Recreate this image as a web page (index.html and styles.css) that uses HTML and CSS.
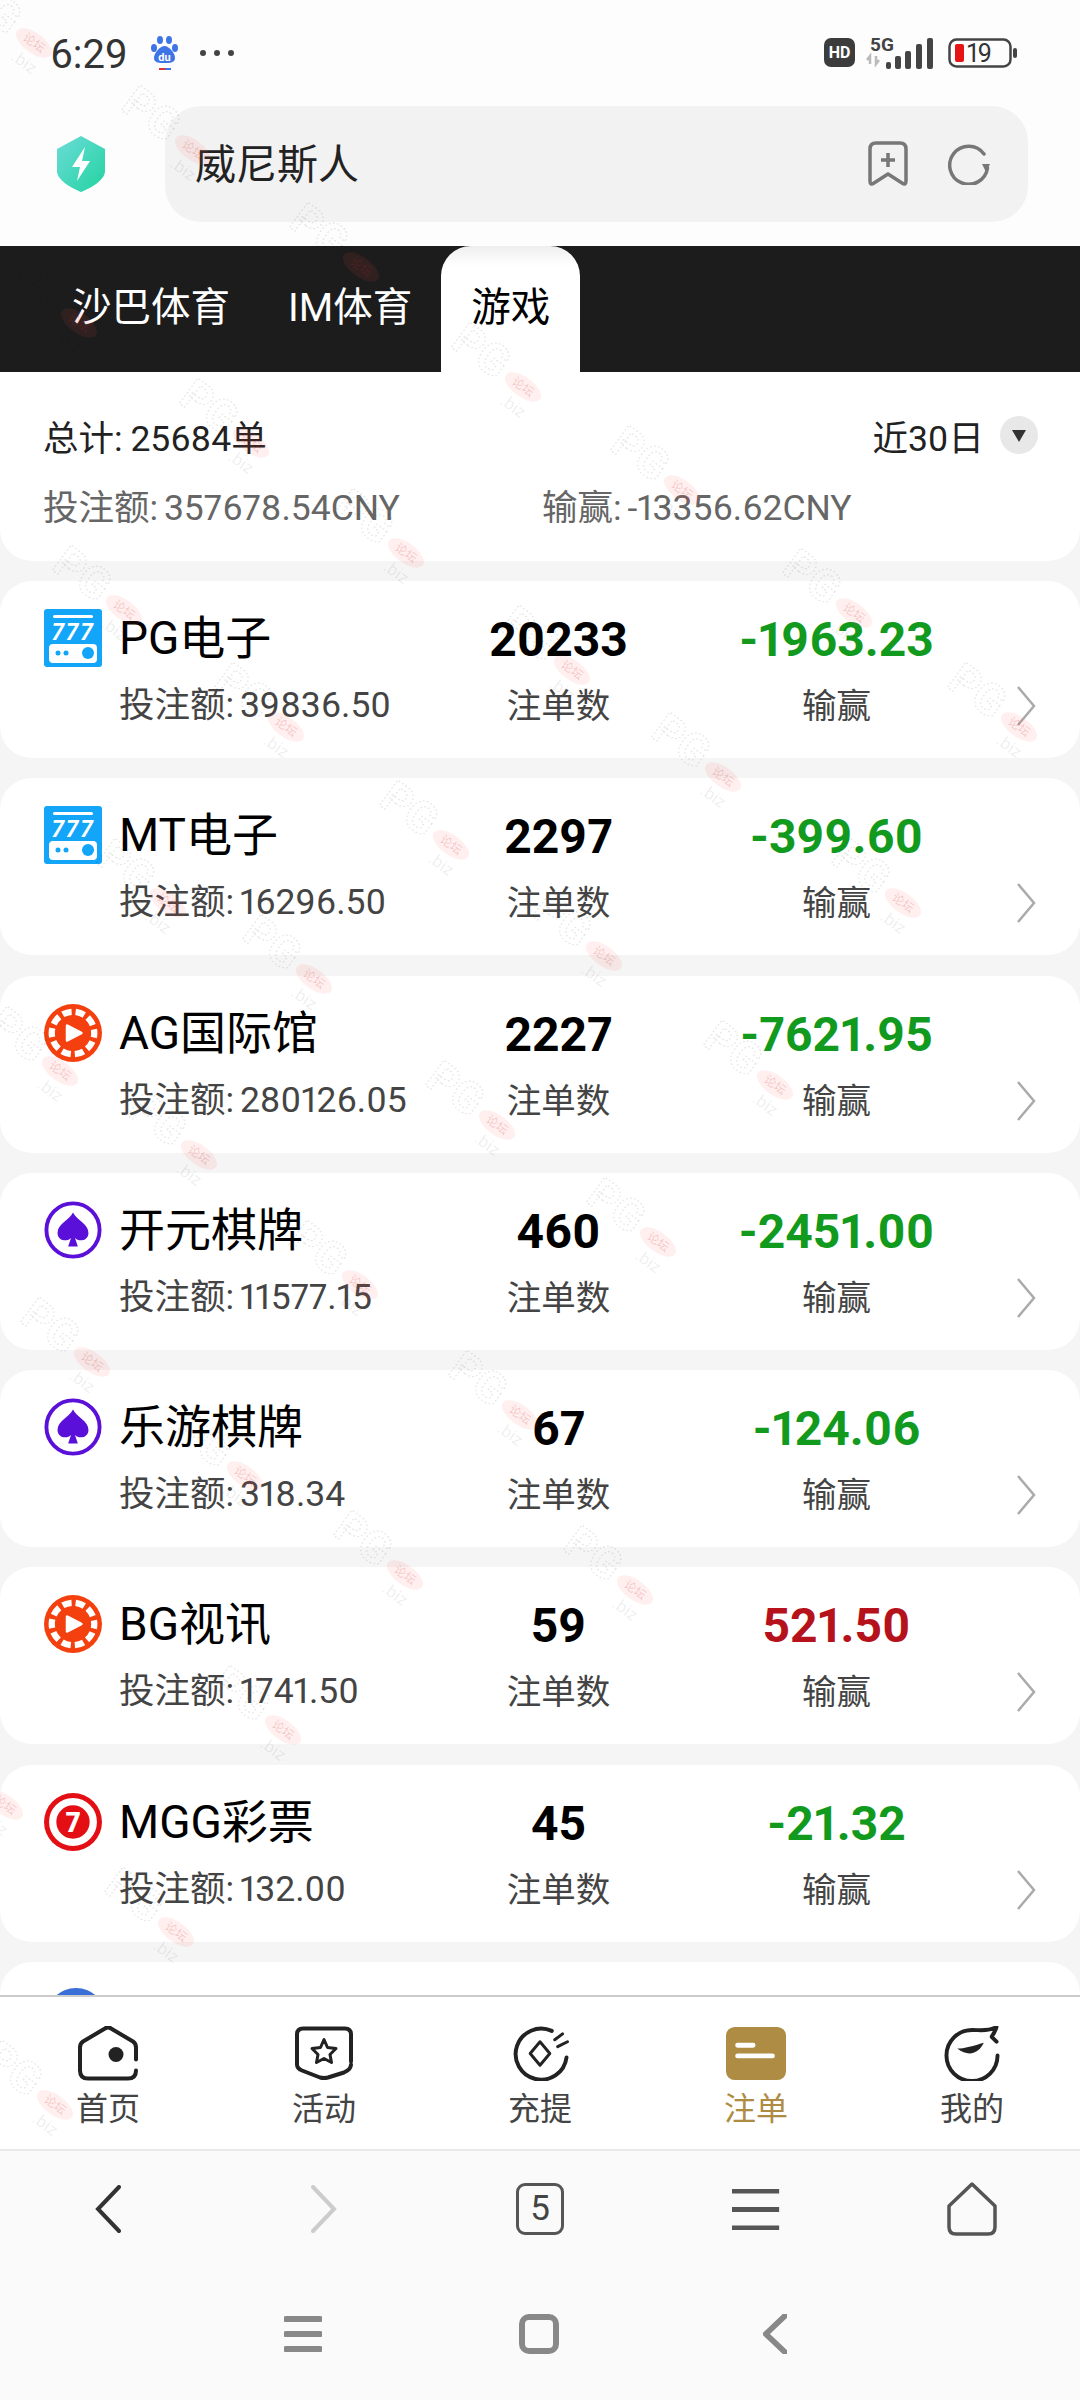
FILE: index.html
```html
<!DOCTYPE html>
<html lang="zh-CN">
<head>
    <meta charset="UTF-8">
    <meta name="viewport" content="width=device-width, initial-scale=1.0">
    <title>注单</title>
    <link rel="stylesheet" href="styles.css">
</head>
<body>
    <!-- Icon defs -->
    <svg class="defs" xmlns="http://www.w3.org/2000/svg">
        <defs>
            <linearGradient id="shield-fill" x1="0" y1="0" x2="1" y2="1">
                <stop offset="0" stop-color="#6ddcd8"></stop>
                <stop offset="1" stop-color="#22d3a0"></stop>
            </linearGradient>
            <symbol id="icon-slot" viewBox="0 0 58 58">
                <rect width="58" height="58" rx="3" fill="#12a5f8"></rect>
                <rect x="9" y="6" width="40" height="3" rx="1.5" fill="#fff"></rect>
                <text x="29" y="31" class="slot-text">777</text>
                <rect x="5" y="35" width="48" height="19" rx="4" fill="#fff"></rect>
                <circle cx="14" cy="44" r="2.500" fill="#12a5f8"></circle>
                <circle cx="22" cy="44" r="2.500" fill="#12a5f8"></circle>
                <circle cx="44" cy="44" r="6" fill="#12a5f8"></circle>
            </symbol>
            <symbol id="icon-reel" viewBox="0 0 60 60">
                <circle cx="30" cy="30" r="30" fill="#f4400f"></circle>
                <circle cx="30" cy="30" r="22" fill="none" stroke="#fff" stroke-width="6.500" stroke-dasharray="9.500 4.320" stroke-dashoffset="4.750"></circle>
                <path d="M24 22.500 L38.500 30 L24 37.500 Z" fill="#fff" stroke="#fff" stroke-width="3" stroke-linejoin="round"></path>
            </symbol>
            <symbol id="icon-spade" viewBox="0 0 60 60">
                <circle cx="30" cy="30" r="27.500" fill="none" stroke="#5a10d8" stroke-width="4"></circle>
                <path d="M30 12 C34 20 46 24 46 33 C46 41 36 43 32 38 L35 47 H25 L28 38 C24 43 14 41 14 33 C14 24 26 20 30 12 Z" fill="#5a10d8"></path>
            </symbol>
            <symbol id="icon-seven" viewBox="0 0 60 60">
                <circle cx="30" cy="30" r="30" fill="#e40f14"></circle>
                <circle cx="30" cy="30" r="21" fill="none" stroke="#fff" stroke-width="7.500"></circle>
                <text x="30" y="40" class="seven-text">7</text>
            </symbol>
            <symbol id="mark" overflow="visible">
                <g transform="rotate(36)">
                    <text x="-84" y="10" class="mark-pg">PG</text>
                    <ellipse cx="0" cy="0" rx="21" ry="10" fill="#ff4d4d" fill-opacity="0.09"></ellipse>
                    <text x="0" y="4" class="mark-pill">论坛</text>
                    <text x="-10" y="27" class="mark-biz">.biz</text>
                </g>
            </symbol>
        </defs>
    </svg>

    <div class="page">
        <header class="top">
            <div class="status-bar">
                <span class="clock">6:29</span>
                <svg class="baidu" viewBox="0 0 34 36">
                    <ellipse cx="12" cy="5" rx="3" ry="4" fill="#3d74e6"></ellipse>
                    <ellipse cx="21" cy="5" rx="3" ry="4" fill="#3d74e6"></ellipse>
                    <ellipse cx="6" cy="13" rx="3" ry="4" fill="#3d74e6"></ellipse>
                    <ellipse cx="27" cy="13" rx="3" ry="4" fill="#3d74e6"></ellipse>
                    <path d="M16.500 11 C21 11 27 18 27 23 C27 28 21 28 16.500 28 C12 28 6 28 6 23 C6 18 12 11 16.500 11 Z" fill="#3d74e6"></path>
                    <text x="16.500" y="26" class="baidu-text">du</text>
                    <rect x="11" y="33" width="6" height="2" fill="#e2342d"></rect>
                    <rect x="17" y="33" width="6" height="2" fill="#3d74e6"></rect>
                </svg>
                <span class="status-dots"><i></i><i></i><i></i></span>
                <svg class="status-icons" viewBox="0 0 194 40">
                    <rect x="0" y="3" width="31" height="29" rx="7" fill="#3c3c3c"></rect>
                    <text x="15.500" y="23" class="hd-text">HD</text>
                    <text x="46" y="16" class="five-g">5G</text>
                    <path d="M46 29 v-8 l-3 4 M52 21 v8 l3 -4" fill="none" stroke="#bbb" stroke-width="2.500"></path>
                    <rect x="62" y="27" width="5" height="7" rx="2" fill="#444"></rect>
                    <rect x="71" y="21" width="6" height="13" rx="2" fill="#444"></rect>
                    <rect x="81" y="16" width="6" height="18" rx="2" fill="#444"></rect>
                    <rect x="92" y="9" width="6" height="25" rx="2" fill="#444"></rect>
                    <rect x="103" y="3" width="6" height="31" rx="2" fill="#444"></rect>
                    <rect x="125.500" y="4.500" width="61" height="27" rx="7" fill="none" stroke="#444" stroke-width="2.500"></rect>
                    <rect x="131" y="9" width="9" height="18" rx="2" fill="#e61414"></rect>
                    <text x="143" y="27" class="battery-text">19</text>
                    <rect x="189" y="13" width="4" height="10" rx="2" fill="#444"></rect>
                </svg>
            </div>
            <div class="address-row">
                <svg class="shield" viewBox="0 0 48 56">
                    <path d="M24 0 L48 13 V35 C48 44 34 52 24 56 C14 52 0 44 0 35 V13 Z" fill="url(#shield-fill)"></path>
                    <path d="M28 11 L15 31 H23 L20 45 L33 25 H25 Z" fill="#fff"></path>
                </svg>
                <div class="address-bar">
                    <span class="address-text">威尼斯人</span>
                    <svg class="bookmark" viewBox="0 0 40 46">
                        <path d="M2 40 V8 Q2 2 8 2 H32 Q38 2 38 8 V40 Q38 45 34 42 L20 33 L6 42 Q2 45 2 40 Z M20 12 V26 M13 19 H27" fill="none" stroke="#777" stroke-width="3.500" stroke-linejoin="round"></path>
                    </svg>
                    <svg class="refresh" viewBox="0 0 42 42">
                        <path d="M36 11 A19 19 0 1 0 39.500 25" fill="none" stroke="#777" stroke-width="3.500" stroke-linecap="round"></path>
                        <path d="M34 21 H42 L38 29 Z" fill="#777"></path>
                    </svg>
                </div>
            </div>
        </header>

        <nav class="tabs">
            <div class="tab">沙巴体育</div>
            <div class="tab">IM体育</div>
            <div class="tab active">游戏</div>
        </nav>

        <section class="summary">
            <div class="summary-row">
                <span>总计: 25684单</span>
                <span class="range">近30日<i class="range-arrow"></i></span>
            </div>
            <div class="summary-row muted">
                <span class="summary-bet">投注额: 357678.54CNY</span>
                <span class="summary-win">输赢: -13356.62CNY</span>
            </div>
        </section>

        <main class="game-list">
            <div class="game-card">
                <div class="game-info">
                    <div class="game-name"><svg class="game-icon"><use href="#icon-slot"></use></svg>PG电子</div>
                    <div class="game-bet">投注额: 39836.50</div>
                </div>
                <div class="stat"><strong>20233</strong><span>注单数</span></div>
                <div class="stat"><strong class="loss">-1963.23</strong><span>输赢</span></div>
                <svg class="chevron" viewBox="0 0 20 40"><path d="M2 1 L18 20 L2 39"></path></svg>
            </div>
            <div class="game-card">
                <div class="game-info">
                    <div class="game-name"><svg class="game-icon"><use href="#icon-slot"></use></svg>MT电子</div>
                    <div class="game-bet">投注额: 16296.50</div>
                </div>
                <div class="stat"><strong>2297</strong><span>注单数</span></div>
                <div class="stat"><strong class="loss">-399.60</strong><span>输赢</span></div>
                <svg class="chevron" viewBox="0 0 20 40"><path d="M2 1 L18 20 L2 39"></path></svg>
            </div>
            <div class="game-card">
                <div class="game-info">
                    <div class="game-name"><svg class="game-icon"><use href="#icon-reel"></use></svg>AG国际馆</div>
                    <div class="game-bet">投注额: 280126.05</div>
                </div>
                <div class="stat"><strong>2227</strong><span>注单数</span></div>
                <div class="stat"><strong class="loss">-7621.95</strong><span>输赢</span></div>
                <svg class="chevron" viewBox="0 0 20 40"><path d="M2 1 L18 20 L2 39"></path></svg>
            </div>
            <div class="game-card">
                <div class="game-info">
                    <div class="game-name"><svg class="game-icon"><use href="#icon-spade"></use></svg>开元棋牌</div>
                    <div class="game-bet">投注额: 11577.15</div>
                </div>
                <div class="stat"><strong>460</strong><span>注单数</span></div>
                <div class="stat"><strong class="loss">-2451.00</strong><span>输赢</span></div>
                <svg class="chevron" viewBox="0 0 20 40"><path d="M2 1 L18 20 L2 39"></path></svg>
            </div>
            <div class="game-card">
                <div class="game-info">
                    <div class="game-name"><svg class="game-icon"><use href="#icon-spade"></use></svg>乐游棋牌</div>
                    <div class="game-bet">投注额: 318.34</div>
                </div>
                <div class="stat"><strong>67</strong><span>注单数</span></div>
                <div class="stat"><strong class="loss">-124.06</strong><span>输赢</span></div>
                <svg class="chevron" viewBox="0 0 20 40"><path d="M2 1 L18 20 L2 39"></path></svg>
            </div>
            <div class="game-card">
                <div class="game-info">
                    <div class="game-name"><svg class="game-icon"><use href="#icon-reel"></use></svg>BG视讯</div>
                    <div class="game-bet">投注额: 1741.50</div>
                </div>
                <div class="stat"><strong>59</strong><span>注单数</span></div>
                <div class="stat"><strong class="win">521.50</strong><span>输赢</span></div>
                <svg class="chevron" viewBox="0 0 20 40"><path d="M2 1 L18 20 L2 39"></path></svg>
            </div>
            <div class="game-card">
                <div class="game-info">
                    <div class="game-name"><svg class="game-icon"><use href="#icon-seven"></use></svg>MGG彩票</div>
                    <div class="game-bet">投注额: 132.00</div>
                </div>
                <div class="stat"><strong>45</strong><span>注单数</span></div>
                <div class="stat"><strong class="loss">-21.32</strong><span>输赢</span></div>
                <svg class="chevron" viewBox="0 0 20 40"><path d="M2 1 L18 20 L2 39"></path></svg>
            </div>
            <div class="game-card">
                <div class="game-info">
                    <i class="blue-dot"></i>
                </div>
            </div>
        </main>

        <!-- Site tab bar -->
        <nav class="bottom-nav">
            <div class="nav-item">
                <svg class="nav-icon" viewBox="0 0 60 54">
                    <path d="M58 33 V21 Q58 17 55 15 L33 2 Q30 0 27 2 L5 15 Q2 17 2 21 V44 Q2 52 10 52 H50 Q58 52 58 44"></path>
                    <circle cx="38" cy="28" r="7.500" class="solid"></circle>
                </svg>
                <span>首页</span>
            </div>
            <div class="nav-item">
                <svg class="nav-icon" viewBox="0 0 60 54">
                    <path d="M57 35 V8 Q57 2 51 2 H9 Q3 2 3 8 V38 Q3 42 8 44 L26 51 Q30 52 34 51 L50 46 Q57 43 57 38"></path>
                    <path class="thin" d="M30 13 L33.500 21 L42 22 L36 28 L37.500 36 L30 32 L22.500 36 L24 28 L18 22 L26.500 21 Z"></path>
                </svg>
                <span>活动</span>
            </div>
            <div class="nav-item">
                <svg class="nav-icon" viewBox="0 0 60 56">
                    <path d="M42 5 A26 26 0 1 0 57 32"></path>
                    <path class="thin" d="M30 16 L40 28 L30 40 L20 28 Z"></path>
                    <path class="thin" d="M45 14 L53 8 M48 21 L58 16"></path>
                </svg>
                <span>充提</span>
            </div>
            <div class="nav-item active">
                <svg class="nav-icon" viewBox="0 0 62 55">
                    <rect width="62" height="55" rx="9" fill="#ae8c43" stroke="none"></rect>
                    <path class="cut" d="M12 19 H28 M12 30 H48"></path>
                </svg>
                <span>注单</span>
            </div>
            <div class="nav-item">
                <svg class="nav-icon" viewBox="0 0 60 56">
                    <path d="M56 30 A26 26 0 1 1 30 4 C38 4 46 6 55 1 C54 6 50 10 50 11 L55 16"></path>
                    <path d="M15 23 C22 23 32 20 42 17 C38 26 28 33 15 23 Z" class="solid"></path>
                </svg>
                <span>我的</span>
            </div>
        </nav>

        <!-- Browser toolbar -->
        <div class="browser-bar">
            <div class="browser-item">
                <svg class="browser-icon dark" viewBox="0 0 26 48"><path d="M24 2 L3 24 L24 46"></path></svg>
            </div>
            <div class="browser-item">
                <svg class="browser-icon faint" viewBox="0 0 26 48"><path d="M2 2 L23 24 L2 46"></path></svg>
            </div>
            <div class="browser-item">
                <div class="tab-count">5</div>
            </div>
            <div class="browser-item">
                <svg class="browser-icon menu" viewBox="0 0 46 40"><path d="M0 2 H46 M0 20 H46 M0 38 H46"></path></svg>
            </div>
            <div class="browser-item">
                <svg class="browser-icon tall" viewBox="0 0 50 54"><path d="M25 2 L48 24 V45 Q48 52 41 52 H9 Q2 52 2 45 V24 Z" stroke-linejoin="round"></path></svg>
            </div>
        </div>

        <!-- Phone system keys -->
        <div class="system-bar">
            <svg class="system-icon menu" viewBox="0 0 38 36"><path d="M2 3 H36 M2 18 H36 M2 33 H36"></path></svg>
            <svg class="system-icon" viewBox="0 0 40 40"><rect x="3" y="3" width="34" height="34" rx="7"></rect></svg>
            <svg class="system-icon" viewBox="0 0 26 42"><path d="M23 2 L3 21 L23 40"></path></svg>
        </div>
    </div>

    <!-- Site watermark, scattered over the page -->
    <svg class="watermark" viewBox="0 0 1080 2400" aria-hidden="true">
        <use href="#mark" x="34" y="43"></use>
        <use href="#mark" x="193" y="150"></use>
        <use href="#mark" x="361" y="267"></use>
        <use href="#mark" x="79" y="323"></use>
        <use href="#mark" x="251" y="443"></use>
        <use href="#mark" x="523" y="387"></use>
        <use href="#mark" x="406" y="553"></use>
        <use href="#mark" x="682" y="490"></use>
        <use href="#mark" x="124" y="610"></use>
        <use href="#mark" x="854" y="613"></use>
        <use href="#mark" x="572" y="670"></use>
        <use href="#mark" x="286" y="727"></use>
        <use href="#mark" x="1019" y="727"></use>
        <use href="#mark" x="723" y="777"></use>
        <use href="#mark" x="168" y="903"></use>
        <use href="#mark" x="451" y="845"></use>
        <use href="#mark" x="903" y="903"></use>
        <use href="#mark" x="604" y="956"></use>
        <use href="#mark" x="314" y="979"></use>
        <use href="#mark" x="775" y="1085"></use>
        <use href="#mark" x="60" y="1071"></use>
        <use href="#mark" x="497" y="1125"></use>
        <use href="#mark" x="199" y="1155"></use>
        <use href="#mark" x="658" y="1242"></use>
        <use href="#mark" x="360" y="1285"></use>
        <use href="#mark" x="92" y="1362"></use>
        <use href="#mark" x="520" y="1415"></use>
        <use href="#mark" x="245" y="1476"></use>
        <use href="#mark" x="635" y="1590"></use>
        <use href="#mark" x="405" y="1575"></use>
        <use href="#mark" x="283" y="1730"></use>
        <use href="#mark" x="5" y="1805"></use>
        <use href="#mark" x="176" y="1932"></use>
        <use href="#mark" x="55" y="2105"></use>
    </svg>
</body>
</html>
```

FILE: styles.css
```css
* {
    box-sizing: border-box;
}

body {
    margin: 0;
    position: relative;
    width: 1080px;
    height: 2400px;
    overflow: hidden;
    background-color: #f5f5f5;
    color: #000;
    font-family: Roboto, "Noto Sans CJK SC", sans-serif;
    font-variant-numeric: proportional-nums;
}

.defs {
    position: absolute;
    width: 0;
    height: 0;
}

.page {
    display: flex;
    flex-direction: column;
    height: 2400px;
}

/* Top of the browser */
.top {
    flex: none;
    height: 246px;
    background: #fdfdfd;
}

.status-bar {
    display: flex;
    align-items: center;
    height: 106px;
    padding-left: 50px;
}

.clock {
    margin-top: 2px;
    font-size: 40px;
    color: #333;
}

.baidu {
    width: 34px;
    height: 36px;
    margin-left: 20px;
}

.baidu-text {
    font-size: 11px;
    font-weight: 700;
    fill: #fff;
    text-anchor: middle;
}

.status-dots {
    display: flex;
    gap: 8px;
    margin-left: 18px;
}

.status-dots i {
    width: 6px;
    height: 6px;
    border-radius: 50%;
    background: #444;
}

.status-icons {
    width: 194px;
    height: 40px;
    margin-top: 4px;
    margin-left: auto;
    margin-right: 62px;
}

.hd-text {
    font-size: 16px;
    font-weight: 700;
    fill: #fff;
    text-anchor: middle;
}

.five-g {
    font-size: 19px;
    font-weight: 700;
    fill: #444;
}

.battery-text {
    font-size: 25px;
    fill: #333;
}

.address-row {
    display: flex;
    align-items: center;
    padding-left: 57px;
}

.shield {
    width: 48px;
    height: 56px;
}

.address-bar {
    display: flex;
    align-items: center;
    width: 863px;
    height: 116px;
    margin-left: 60px;
    padding: 0 38px 0 30px;
    background: #f2f2f2;
    border-radius: 36px;
}

.address-text {
    flex: 1;
    margin-top: -6px;
    font-size: 41px;
    color: #222;
}

.bookmark {
    width: 40px;
    height: 46px;
}

.refresh {
    width: 42px;
    height: 42px;
    margin-left: 40px;
}

/* Category tabs */
.tabs {
    flex: none;
    display: flex;
    height: 126px;
    padding-left: 43px;
    background: #1c1c1c;
}

.tab {
    padding: 0 29px;
    font-size: 39.500px;
    line-height: 124px;
    color: #fff;
}

.tab.active {
    padding: 0 30px;
    background: linear-gradient(#eeeeee, #fff 20px);
    border-radius: 30px 30px 0 0;
    color: #000;
}

/* Totals */
.summary {
    flex: none;
    height: 189px;
    padding: 40px 42px 0 43px;
    background: #fff;
    border-radius: 0 0 32px 32px;
    font-size: 35.500px;
    word-spacing: -1px;
    color: #222;
}

.summary-row {
    display: flex;
    justify-content: space-between;
    align-items: center;
    height: 46px;
}

.summary-row.muted {
    justify-content: flex-start;
    margin-top: 23px;
    word-spacing: -3px;
    color: #666;
}

.summary-bet {
    width: 499px;
}

.range {
    display: flex;
    align-items: center;
}

.range-arrow {
    position: relative;
    width: 38px;
    height: 38px;
    margin-left: 16px;
    background: #e8e8e8;
    border-radius: 50%;
}

.range-arrow::after {
    content: "";
    position: absolute;
    top: 14px;
    left: 12px;
    border-top: 12px solid #333;
    border-left: 7px solid transparent;
    border-right: 7px solid transparent;
}

/* Game rows */
.game-list {
    flex: 1;
    min-height: 0;
    display: flex;
    flex-direction: column;
    gap: 20.300px;
    padding-top: 20px;
    overflow: hidden;
}

.game-card {
    flex: none;
    display: flex;
    height: 177px;
    padding: 24px 0 0 44px;
    background: #fff;
    border-radius: 32px;
}

.game-info {
    width: 374px;
}

.game-name {
    display: flex;
    align-items: center;
    height: 66px;
    font-size: 46px;
    line-height: 60px;
}

.game-icon {
    width: 58px;
    height: 58px;
    margin-right: 17px;
}

.blue-dot {
    display: block;
    width: 60px;
    height: 60px;
    margin: 2px 0 0 2px;
    background: #3a6fd8;
    border-radius: 50%;
}

.game-bet {
    height: 66px;
    margin-left: 75px;
    font-size: 35.500px;
    line-height: 68px;
    word-spacing: -3px;
    color: #444;
}

.stat {
    display: flex;
    flex-direction: column;
    align-items: center;
    width: 278px;
    padding: 2px 0 0 3px;
}

.stat strong {
    height: 66px;
    font-size: 48px;
    font-weight: 700;
    line-height: 66px;
}

.stat span {
    height: 64px;
    font-size: 34.500px;
    line-height: 66px;
    color: #444;
}

.stat .loss {
    color: #129a1e;
}

.stat .win {
    color: #b5121b;
}

.chevron {
    width: 20px;
    height: 40px;
    margin: 81px 0 0 42px;
    fill: none;
    stroke: #aaa;
    stroke-width: 2.500;
}

.slot-text {
    font-size: 24px;
    font-weight: 700;
    font-style: italic;
    letter-spacing: 2px;
    fill: #fff;
    text-anchor: middle;
}

.seven-text {
    font-size: 29px;
    font-weight: 900;
    fill: #fff;
    text-anchor: middle;
}

/* Tab bar */
.bottom-nav {
    flex: none;
    display: flex;
    height: 156px;
    padding-top: 29px;
    background: #fff;
    border-top: 2px solid #ccc;
    border-bottom: 2px solid #e8e8e8;
}

.nav-item {
    flex: 1;
    display: flex;
    flex-direction: column;
    align-items: center;
    font-size: 32px;
    color: #444;
}

.nav-item span {
    margin-top: 8px;
    line-height: 40px;
}

.nav-item.active {
    color: #ae8c43;
}

.nav-icon {
    width: 60px;
    height: 55px;
    fill: none;
    stroke: #222;
    stroke-width: 4;
    stroke-linecap: round;
    stroke-linejoin: round;
}

.nav-icon .solid {
    fill: #222;
    stroke: none;
}

.nav-icon .thin {
    stroke-width: 3;
}

.nav-icon .cut {
    stroke: #fff;
    stroke-width: 5;
}

/* Browser toolbar */
.browser-bar {
    flex: none;
    display: flex;
    height: 116px;
    background: #fafafa;
}

.browser-item {
    flex: 1;
    display: flex;
    justify-content: center;
    align-items: center;
}

.browser-icon {
    height: 48px;
    fill: none;
    stroke: #555;
    stroke-width: 4;
    stroke-linecap: round;
}

.browser-icon.menu {
    height: 41px;
    stroke-width: 5;
    stroke-linecap: butt;
}

.browser-icon.tall {
    height: 54px;
    stroke-width: 3.500;
}

.browser-icon.dark {
    stroke: #333;
}

.browser-icon.faint {
    stroke: #ccc;
}

.tab-count {
    width: 48px;
    height: 52px;
    border: 3.500px solid #555;
    border-radius: 9px;
    font-size: 35px;
    line-height: 45px;
    text-align: center;
    color: #444;
}

.system-bar {
    flex: none;
    height: 133px;
    display: grid;
    grid-template-columns: repeat(3, 236px);
    justify-content: center;
    justify-items: center;
    align-items: center;
    padding-right: 2px;
    background: #fafafa;
}

.system-icon {
    height: 40px;
    fill: none;
    stroke: #888;
    stroke-width: 6;
    stroke-linecap: round;
}

.system-icon.menu {
    height: 36px;
}

/* Watermark */
.watermark {
    position: absolute;
    top: 0;
    left: 0;
    width: 1080px;
    height: 2400px;
    pointer-events: none;
}

.mark-pg {
    font-size: 44px;
    font-weight: 700;
    fill: none;
    stroke: #000;
    stroke-opacity: 0.1;
    stroke-width: 1.500;
    stroke-dasharray: 2 2;
}

.mark-pill {
    font-size: 12px;
    fill: #c22;
    fill-opacity: 0.2;
    text-anchor: middle;
}

.mark-biz {
    font-size: 17px;
    fill: #000;
    fill-opacity: 0.08;
}
```
